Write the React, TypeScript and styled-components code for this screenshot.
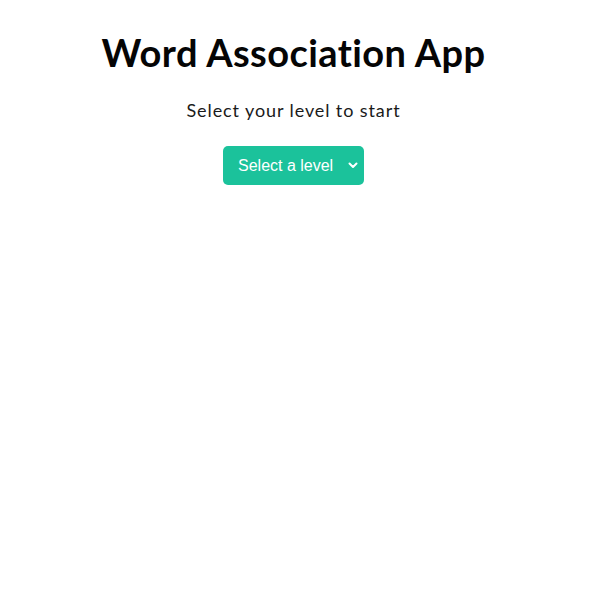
import React from "react";
import styled, { createGlobalStyle } from "styled-components";

const GlobalStyle = createGlobalStyle`
  html, body { margin: 0; padding: 0; background: #ffffff; }
  body { font-family: "Lato", "DejaVu Sans", sans-serif; }
`;

const Page = styled.main`
  width: 587px;
  display: flex;
  flex-direction: column;
  align-items: center;
  padding-top: 29px;
`;

const Title = styled.h1`
  margin: 0;
  font-family: "Lato", sans-serif;
  font-size: 38px;
  line-height: 46px;
  font-weight: 700;
  color: #050505;
  letter-spacing: 0.4px;
`;

const Subtitle = styled.p`
  margin: 24px 0 0;
  font-family: "Lato", sans-serif;
  font-size: 18px;
  line-height: 22px;
  color: #1a1a1a;
  letter-spacing: 0.9px;
`;

const SelectWrap = styled.div`
  position: relative;
  margin-top: 25px;
`;

const LevelSelect = styled.select`
  appearance: none;
  -webkit-appearance: none;
  width: 141px;
  height: 39px;
  padding: 0 20px 0 15px;
  border: none;
  border-radius: 5px;
  background: #1bc29b;
  color: #ffffff;
  font-family: "Liberation Sans", Arial, sans-serif;
  font-size: 16px;
  cursor: pointer;
  outline: none;
`;

const Chevron = styled.svg`
  position: absolute;
  right: 6px;
  top: 16px;
  width: 10px;
  height: 7px;
  pointer-events: none;
`;

export default function App() {
  return (
    <>
      <GlobalStyle />
      <Page>
        <Title>Word Association App</Title>
        <Subtitle>Select your level to start</Subtitle>
        <SelectWrap>
          <LevelSelect defaultValue="">
            <option value="" disabled>
              Select a level
            </option>
            <option value="1">Level 1</option>
            <option value="2">Level 2</option>
            <option value="3">Level 3</option>
          </LevelSelect>
          <Chevron viewBox="0 0 10 7">
            <path d="M1.5 1.5 L5 5 L8.5 1.5" fill="none" stroke="#ffffff" strokeWidth="2" strokeLinecap="round" strokeLinejoin="round" />
          </Chevron>
        </SelectWrap>
      </Page>
    </>
  );
}
